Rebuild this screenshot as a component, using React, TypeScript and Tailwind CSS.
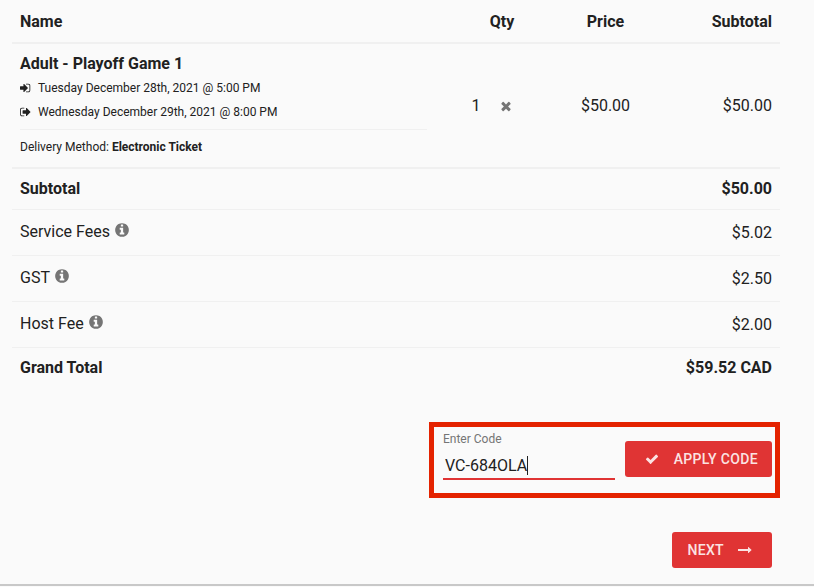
import { useState } from "react";
import type { ReactNode } from "react";

const ICONS = {
  signIn:
    "M1184 896q0 26-19 45l-544 544q-19 19-45 19t-45-19-19-45v-288h-448q-26 0-45-19t-19-45v-384q0-26 19-45t45-19h448v-288q0-26 19-45t45-19 45 19l544 544q19 19 19 45zm352-352v704q0 119-84.5 203.5t-203.5 84.5h-320q-13 0-22.5-9.5t-9.5-22.5q0-4-1-20t-.5-26.5 3-23.5 10-19.5 20.5-6.5h320q66 0 113-47t47-113v-704q0-66-47-113t-113-47h-312l-11.5-1-11.5-3-8-5.5-7-9-2-13.5q0-4-1-20t-.5-26.5 3-23.5 10-19.5 20.5-6.5h320q119 0 203.5 84.5t84.5 203.5z",
  signOut:
    "M640 1440q0 4 1 20t.5 26.5-3 23.5-10 19.5-20.5 6.5h-320q-119 0-203.5-84.5t-84.5-203.5v-704q0-119 84.5-203.5t203.5-84.5h320q13 0 22.5 9.5t9.5 22.5q0 4 1 20t.5 26.5-3 23.5-10 19.5-20.5 6.5h-320q-66 0-113 47t-47 113v704q0 66 47 113t113 47h312l11.5 1 11.5 3 8 5.5 7 9 2 13.5zm928-544q0 26-19 45l-544 544q-19 19-45 19t-45-19-19-45v-288h-448q-26 0-45-19t-19-45v-384q0-26 19-45t45-19h448v-288q0-26 19-45t45-19 45 19l544 544q19 19 19 45z",
  times:
    "M1490 1322q0 40-28 68l-136 136q-28 28-68 28t-68-28l-294-294-294 294q-28 28-68 28t-68-28l-136-136q-28-28-28-68t28-68l294-294-294-294q-28-28-28-68t28-68l136-136q28-28 68-28t68 28l294 294 294-294q28-28 68-28t68 28l136 136q28 28 28 68t-28 68l-294 294 294 294q28 28 28 68z",
  check:
    "M1671 566q0 40-28 68l-724 724-136 136q-28 28-68 28t-68-28l-136-136-362-362q-28-28-28-68t28-68l136-136q28-28 68-28t68 28l294 295 656-657q28-28 68-28t68 28l136 136q28 28 28 68z",
  info:
    "M1152 1376v-160q0-14-9-23t-23-9h-96v-512q0-14-9-23t-23-9h-320q-14 0-23 9t-9 23v160q0 14 9 23t23 9h96v320h-96q-14 0-23 9t-9 23v160q0 14 9 23t23 9h448q14 0 23-9t9-23zm-128-896v-160q0-14-9-23t-23-9h-192q-14 0-23 9t-9 23v160q0 14 9 23t23 9h192q14 0 23-9t9-23zm640 416q0 209-103 385.5t-279.5 279.5-385.5 103-385.5-103-279.5-279.5-103-385.5 103-385.5 279.5-279.5 385.5-103 385.5 103 279.5 279.5 103 385.5z",
  arrow:
    "M1728 893q0 14-10 24l-384 354q-16 14-35 6-19-9-19-29v-224h-1248q-14 0-23-9t-9-23v-192q0-14 9-23t23-9h1248v-224q0-21 19-29t35 5l384 350q10 10 10 23z",
};

function Icon({ name, className }: { name: keyof typeof ICONS; className: string }) {
  return (
    <svg viewBox="0 0 1792 1792" fill="currentColor" aria-hidden="true" className={className}>
      <path d={ICONS[name]} />
    </svg>
  );
}

function RedButton({ children, className }: { children: ReactNode; className: string }) {
  return (
    <button
      type="button"
      className={`flex h-9 shrink-0 items-center rounded-[3px] bg-[#e03434] text-sm font-medium tracking-wide text-[#fbe3e3] ${className}`}
    >
      {children}
    </button>
  );
}

const FEES = [
  { label: "Service Fees", amount: "$5.02" },
  { label: "GST", amount: "$2.50" },
  { label: "Host Fee", amount: "$2.00" },
];

export default function App() {
  const [code, setCode] = useState("VC-684OLA");

  return (
    <main className="min-h-screen bg-[#fafafa] font-['Roboto',sans-serif] text-base text-[#212121]">
      <div className="border-b-2 border-[#c8c8c8] pr-[34px] pb-4 pl-3">
        <table className="w-full table-fixed border-separate border-spacing-0">
          <colgroup>
            <col />
            <col className="w-[134px]" />
            <col className="w-[73px]" />
            <col className="w-[138px]" />
          </colgroup>
          <thead>
            <tr className="h-11 *:border-b-2 *:border-[#f0f0f0] *:px-2 *:pt-0.5 *:font-bold">
              <th className="text-left">Name</th>
              <th className="text-center">Qty</th>
              <th className="text-center">Price</th>
              <th className="text-right">Subtotal</th>
            </tr>
          </thead>
          <tbody>
            <tr className="*:border-b-2 *:border-[#f0f0f0] *:px-2">
              <td className="py-2">
                <div className="font-bold">Adult - Playoff Game 1</div>
                <div className="flex h-6 items-center gap-[6px] text-xs">
                  <Icon name="signIn" className="size-3" />
                  Tuesday December 28th, 2021 @ 5:00 PM
                </div>
                <div className="flex h-6 items-center gap-[6px] text-xs">
                  <Icon name="signOut" className="size-3" />
                  Wednesday December 29th, 2021 @ 8:00 PM
                </div>
                <hr className="my-[5px] border-[#f0f0f0]" />
                <div className="text-xs leading-6">
                  Delivery Method: <strong className="font-bold">Electronic Ticket</strong>
                </div>
              </td>
              <td>
                <div className="flex items-center justify-center gap-[18px] pr-5">
                  <span>1</span>
                  <button type="button" aria-label="Remove ticket" className="text-[#757575]">
                    <Icon name="times" className="size-[14px]" />
                  </button>
                </div>
              </td>
              <td className="text-center">$50.00</td>
              <td className="text-right">$50.00</td>
            </tr>
            <tr className="h-[41px] *:border-b *:border-[#f0f0f0] *:px-2 *:font-bold">
              <th scope="row" colSpan={3} className="text-left">
                Subtotal
              </th>
              <td className="text-right">$50.00</td>
            </tr>
            {FEES.map((fee) => (
              <tr key={fee.label} className="h-[46px] *:border-b *:border-[#f0f0f0] *:px-2">
                <th scope="row" colSpan={3} className="pb-0.5 text-left font-normal">
                  <span className="flex items-center gap-1">
                    {fee.label}
                    <button type="button" aria-label={`About ${fee.label}`} className="pb-1 text-[#757575]">
                      <Icon name="info" className="size-4" />
                    </button>
                  </span>
                </th>
                <td className="text-right">{fee.amount}</td>
              </tr>
            ))}
            <tr className="h-10 *:px-2 *:font-bold">
              <th scope="row" colSpan={2} className="text-left">
                Grand Total
              </th>
              <td colSpan={2} className="text-right">
                $59.52 CAD
              </td>
            </tr>
          </tbody>
        </table>

        <form className="mt-[34px] ml-auto flex h-19 w-[351px] items-start gap-[10px] border-5 border-[#e42300] pr-[3px] pl-[9px]">
          <div className="min-w-0 flex-1">
            <label htmlFor="code" className="block pt-1 text-xs leading-4 text-[#757575]">
              Enter Code
            </label>
            <div className="relative mt-1">
              <input
                id="code"
                value={code}
                onChange={(event) => setCode(event.target.value)}
                className="block h-[29px] w-full border-b-2 border-[#e03434] px-[2px] pt-0.5 outline-none"
              />
              <span className="absolute top-[5px] left-[84px] h-[19px] w-px bg-[#212121]" />
            </div>
          </div>
          <RedButton className="mt-[14px] gap-[15px] pr-[14px] pl-5">
            <Icon name="check" className="size-[14px]" />
            APPLY CODE
          </RedButton>
        </form>

        <div className="mt-[34px] flex justify-end pr-2">
          <RedButton className="gap-[14px] pr-5 pl-[15px]">
            NEXT
            <Icon name="arrow" className="size-[14px]" />
          </RedButton>
        </div>
      </div>
    </main>
  );
}
